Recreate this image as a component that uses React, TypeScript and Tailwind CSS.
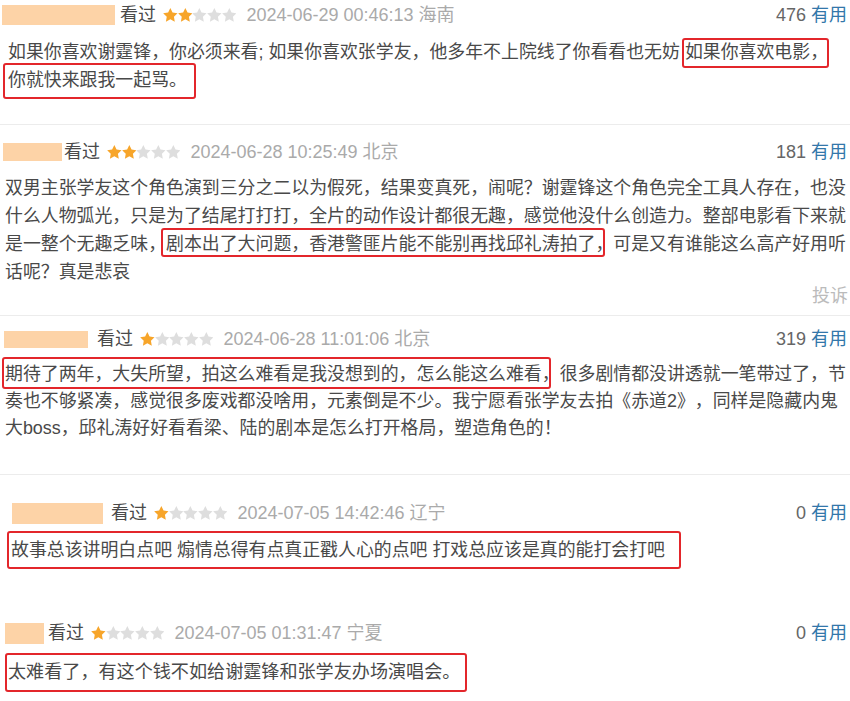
import type { ReactNode } from 'react'

const STAR = 'M12 2l3.09 6.26L22 9.27l-5 4.87 1.18 6.88L12 17.77l-6.18 3.25L7 14.14 2 9.27l6.91-1.01z'

const Stars = ({ n }: { n: number }) => (
    <span className="ml-[7px] flex">
        {[0, 1, 2, 3, 4].map(i => (
            <svg key={i} width="14.7" height="14" viewBox="2 2 20 19.5">
                <path d={STAR} fill={i < n ? '#f7a52a' : '#dedede'} />
            </svg>
        ))}
    </span>
)

/** red annotation box drawn over a piece of the comment, does not take space */
const Mark = ({ box, children }: { box: string; children: ReactNode }) => (
    <span className={`relative before:absolute before:rounded-[3px] before:border-2 before:border-[#e3262b] ${box}`}>
        {children}
    </span>
)

type HeaderProps = {
    name: string
    stars: number
    date: string
    votes: number
}

const Header = ({ name, stars, date, votes }: HeaderProps) => (
    <div className="flex h-[30px] items-center justify-between text-[18px]">
        <div className="flex items-center">
            <span className={`block bg-[#fdd3a7] ${name}`} />
            <span className="text-[#4a4a4a]">看过</span>
            <Stars n={stars} />
            <span className="ml-[10px] text-[#aaa]">{date}</span>
        </div>
        <span className="pr-[3px]">
            <span className="text-[#666]">{votes}</span> <span className="text-[#3377aa]">有用</span>
        </span>
    </div>
)

export default function App() {
    return (
        <div className="h-[701px] w-[850px] overflow-hidden bg-white text-[#494949] font-['Liberation_Sans','Noto_Sans_CJK_SC',sans-serif] [text-spacing-trim:space-all]">
            <div className="pb-[30px]">
                <Header name="ml-[2px] mr-[5px] h-[20px] w-[113px]" stars={2} date="2024-06-29 00:46:13 海南" votes={476} />
                <p className="mt-[8px] pl-[8px] pr-[14px] text-[17.9px] leading-[28px]">
                    如果你喜欢谢霆锋，你必须来看; 如果你喜欢张学友，他多年不上院线了你看看也无妨{' '}
                    <Mark box="before:top-[-4px] before:bottom-[-6px] before:left-[-3px] before:right-[-1px]">如果你喜欢电影，</Mark>
                    <Mark box="before:top-[-7px] before:bottom-[-9px] before:left-[-5px] before:right-[-9px]">你就快来跟我一起骂。</Mark>
                </p>
            </div>
            <div className="h-px bg-[#ececec]" />

            <div className="pt-[12px] pb-[9px]">
                <Header name="ml-[3px] mr-[2px] h-[18px] w-[59px]" stars={2} date="2024-06-28 10:25:49 北京" votes={181} />
                <p className="mt-[7px] pl-[5px] text-[17.9px] leading-[28px]">
                    双男主张学友这个角色演到三分之二以为假死，结果变真死，闹呢？谢霆锋这个角色完全工具人存在，也没什么人物弧光，只是为了结尾打打打，全片的动作设计都很无趣，感觉他没什么创造力。整部电影看下来就是一整个无趣乏味，
                    <Mark box="before:top-[-6px] before:bottom-[-3px] before:left-[-5px] before:right-[8px]">剧本出了大问题，香港警匪片能不能别再找邱礼涛拍了，</Mark>
                    可是又有谁能这么高产好用听话呢？真是悲哀
                </p>
                <div className="pr-[2px] text-right text-[18px] leading-[20px] text-[#bbb]">投诉</div>
            </div>
            <div className="h-px bg-[#ececec]" />

            <div className="pt-[8px] pb-[32px]">
                <Header name="ml-[4px] mr-[9px] h-[17px] w-[84px]" stars={1} date="2024-06-28 11:01:06 北京" votes={319} />
                <p className="mt-[7px] pl-[5px] text-[17.9px] leading-[27px]">
                    <Mark box="before:top-[-7px] before:bottom-[-5px] before:left-[-3px] before:right-[9px]">期待了两年，大失所望，拍这么难看是我没想到的，怎么能这么难看，</Mark>
                    很多剧情都没讲透就一笔带过了，节奏也不够紧凑，感觉很多废戏都没啥用，元素倒是不少。我宁愿看张学友去拍《赤道2》，同样是隐藏内鬼大boss，邱礼涛好好看看梁、陆的剧本是怎么打开格局，塑造角色的！
                </p>
            </div>
            <div className="h-px bg-[#ececec]" />

            <div className="pt-[23px]">
                <Header name="ml-[12px] mr-[8px] h-[21px] w-[91px]" stars={1} date="2024-07-05 14:42:46 辽宁" votes={0} />
                <p className="mt-[8px] pl-[11px] text-[17.9px] leading-[28px]">
                    <Mark box="before:top-[-9px] before:bottom-[-9px] before:left-[-4px] before:right-[-16px]">故事总该讲明白点吧 煽情总得有点真正戳人心的点吧 打戏总应该是真的能打会打吧</Mark>
                </p>
            </div>

            <div className="pt-[54px]">
                <Header name="ml-[5px] mr-[4px] h-[21px] w-[39px]" stars={1} date="2024-07-05 01:31:47 宁夏" votes={0} />
                <p className="mt-[10px] pl-[8px] text-[18.1px] leading-[28px]">
                    <Mark box="before:top-[-9px] before:bottom-[-10px] before:left-[-3px] before:right-[-7px]">太难看了，有这个钱不如给谢霆锋和张学友办场演唱会。</Mark>
                </p>
            </div>
        </div>
    )
}
